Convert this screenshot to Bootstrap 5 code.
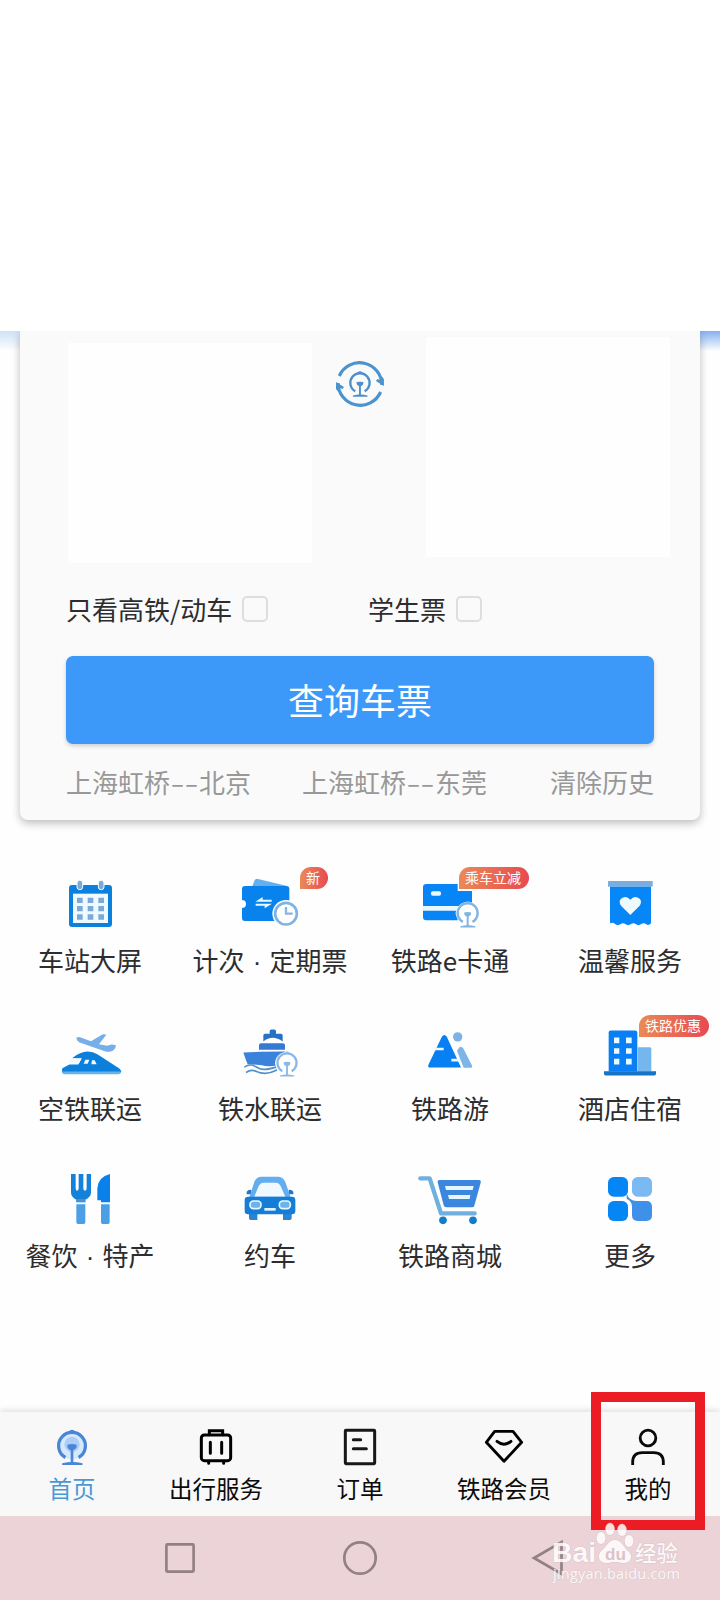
<!DOCTYPE html>
<html lang="zh-CN">
<head>
<meta charset="utf-8">
<meta name="viewport" content="width=device-width, initial-scale=1">
<title>铁路出行</title>
<link href="https://cdn.jsdelivr.net/npm/bootstrap@5.3.0/dist/css/bootstrap.min.css" rel="stylesheet">
<style>
  body { font-family: "Noto Sans CJK SC", sans-serif; background: #fefefe; color: #2d2d2f; }
  .screen { width: 720px; height: 1600px; overflow: hidden; }
  .top-blank { height: 331px; background: #fff; }
  .hero { height: 506px; padding: 0 20px 17px; overflow: hidden;
    background: linear-gradient(rgba(254,254,254,0), #fefefe) 0 0/100% 20px no-repeat, linear-gradient(90deg, #cfe2f6 20px, #85b0f2 690px) 0 0/100% 20px no-repeat; }
  .ticket { height: 489px; background: #fafafa; border-radius: 0 0 8px 8px; box-shadow: 0 3px 9px rgba(0,0,0,.27); }
  .stations { height: 232px; padding: 6px 30px 0 48px; }
  .station { width: 244px; height: 220px; background: #fefefe; }
  .station-from { margin-top: 6px; }
  .swap-icon { width: 50px; height: 50px; margin: 22px 42px 0 23px; }
  .options { font-size: 26px; line-height: 34px; margin: 29px 46px 0; height: 34px; }
  .first-option { width: 302px; }
  .tick { width: 26px; height: 26px; border: 2px solid #dedede; border-radius: 5px; margin-left: 10px; background: #fafafa; margin-top: -1px; }
  .search { height: 88px; margin: 30px 46px 0; background: #3c98f9; color: #fff; font-size: 36px; line-height: 86px; border-radius: 7px; box-shadow: 0 2px 4px rgba(0,0,0,.18); }
  .history { margin: 20px 46px 0; font-size: 26px; line-height: 36px; color: #989898; }
  .first-trip { margin-right: 51px; }
  .dash { display: inline-block; width: 29px; text-align: center; transform: scaleX(1.55); }
  .services { height: 575px; padding-top: 33px; }
  .service { height: 147.5px; }
  .service svg, .tab-item svg { display: block; overflow: visible; }
  .service-icon { width: 80px; height: 60px; }
  .service-label { font-size: 26px; line-height: 34px; margin-top: 13px; white-space: nowrap; }
  .dot { display: inline-block; width: 25px; text-align: center; font-family: "Liberation Sans", sans-serif; }
  .promo { position: absolute; left: 49px; top: -3px; width: 70px; height: 22px; border-radius: 11px 11px 11px 0; background: linear-gradient(90deg, #ea8a58, #e84a50); color: #fff; font-size: 14px; line-height: 21px; padding-right: 2px; text-align: center; white-space: nowrap; }
  .promo-new { left: 70px; width: 28px; }
  .tabs { height: 104px; background: #f8f8f8; box-shadow: 0 -2px 6px rgba(0,0,0,.12); padding-top: 15px; }
  .tab-item { width: 144px; color: #0b0b0b; font-size: 23.5px; line-height: 32px; position: relative; }
  .tab-item svg { width: 44px; height: 40px; margin-bottom: 5px; }
  .tab-item.active { color: #4b98d6; }
  .marker { position: absolute; left: 15px; top: -35px; width: 114px; height: 138px; border: 10px solid #eb1c24; z-index: 3; }
  .system { height: 84px; background: #ecd3d8; position: relative; }
  .system svg.keys { display: block; width: 720px; height: 84px; }
  .brand { position: absolute; left: 552px; top: 4px; z-index: 4; width: 132px; height: 68px; overflow: visible; opacity: .85; }
</style>
</head>
<body>
<svg width="0" height="0" class="position-absolute">
  <defs>
    <symbol id="rail" viewBox="0 0 90 110" overflow="visible">
      <path d="M25 86A41 41 0 1 1 65 86" fill="none" stroke="currentColor" stroke-width="10"/>
      <path d="M34 7q11-12 22 0z" fill="currentColor"/>
      <path d="M31 47q14-4 28 0v8q-4 8-10 9v36q10 0 28 4v5H15v-5q18-4 26-4V64q-7-2-10-9z" fill="currentColor"/>
    </symbol>
  </defs>
</svg>
<main class="screen d-flex flex-column">
  <div class="top-blank flex-shrink-0"></div>
  <section class="hero flex-shrink-0">
    <div class="ticket">
      <div class="stations d-flex justify-content-between align-items-start">
        <div class="station station-from"></div>
        <svg class="swap-icon" viewBox="-25 -25 50 50">
          <g fill="none" stroke="#4b93cf" stroke-width="3.200">
            <path d="M-20.700 -8A22.300 22.300 0 0 1 22 1"/>
            <path d="M20.700 8A22.300 22.300 0 0 1-22 -1"/>
          </g>
          <path d="M24 2l-8-5 1.500-2 3 1 1-4 2.500 3zM-24 -2l8 5-1.500 2-3-1-1 4-2.500-3z" fill="#4b93cf"/>
          <use href="#rail" x="-11.500" y="-13" width="23" height="26" color="#4b8fcb"/>
        </svg>
        <div class="station"></div>
      </div>
      <div class="options d-flex">
        <div class="first-option d-flex align-items-center"><span>只看高铁/动车</span><span class="tick"></span></div>
        <div class="d-flex align-items-center"><span>学生票</span><span class="tick"></span></div>
      </div>
      <div class="search text-center">查询车票</div>
      <div class="history d-flex">
        <span class="first-trip">上海虹桥<span class="dash">--</span>北京</span><span>上海虹桥<span class="dash">--</span>东莞</span><span class="ms-auto">清除历史</span>
      </div>
    </div>
  </section>

  <section class="services flex-shrink-0">
    <div class="row row-cols-4 g-0">
      <div class="col service d-flex flex-column align-items-center">
        <div class="service-icon position-relative">
          <svg viewBox="150 60 240 180" width="80" height="60">
            <rect x="207" y="105" width="129" height="126" rx="9" fill="#0b80dc"/><rect x="219" y="131" width="105" height="88" fill="#effaff"/>
            <g fill="#7da9d8"><path d="M231 143h17v16h-17zM263 143h17v16h-17zM295 143h17v16h-17zM231 168h17v16h-17zM263 168h17v16h-17zM295 168h17v16h-17zM231 193h17v16h-17zM263 193h17v16h-17zM295 193h17v16h-17z"/>
            <rect x="231" y="91" width="17" height="28" rx="8" stroke="#f4fcff" stroke-width="3"/><rect x="295" y="91" width="17" height="28" rx="8" stroke="#f4fcff" stroke-width="3"/></g>
          </svg>
        </div>
        <div class="service-label">车站大屏</div>
      </div>
      <div class="col service d-flex flex-column align-items-center">
        <div class="service-icon position-relative">
          <svg viewBox="690 60 240 180" width="80" height="60">
            <path d="M757 108l7-17q3-6 10-4l88 21z" fill="#64b0ee"/>
            <path d="M735 108h124q9 0 9 9v87q0 9-9 9H735q-9 0-9-9v-30a12 12 0 0 0 0-24v-33q0-9 9-9z" fill="#0882ec"/>
            <path d="M766 155h49v-6h-27v-8zM816 161h-49v6h27v8z" fill="#eaf8ff"/>
            <circle cx="858" cy="191" r="41" fill="#fff"/><circle cx="858" cy="191" r="32.500" fill="#fff" stroke="#7fb3e4" stroke-width="8"/>
            <path d="M858 171v20h20" fill="none" stroke="#8ab5df" stroke-width="7"/>
          </svg>
          <span class="promo promo-new">新</span>
        </div>
        <div class="service-label">计次<span class="dot">·</span>定期票</div>
      </div>
      <div class="col service d-flex flex-column align-items-center">
        <div class="service-icon position-relative">
          <svg viewBox="150 60 240 180" width="80" height="60">
            <rect x="189" y="102" width="147" height="109" rx="10" fill="#0785f7"/>
            <path d="M189 168h147v14H189z" fill="#e8f8ff"/><rect x="213" y="124" width="30" height="13" rx="5" fill="#e9f8ff"/>
            <path d="M293 96h48v27h-48z" fill="#fff"/><path d="M293 123h43v15h-43z" fill="#0785f7"/>
            <path d="M287 192a36 36 0 0 1 73 0v44h-58z" fill="#fff"/>
            <use href="#rail" x="288" y="153" width="70" height="80" color="#7fb4e3"/>
          </svg>
          <span class="promo">乘车立减</span>
        </div>
        <div class="service-label">铁路e卡通</div>
      </div>
      <div class="col service d-flex flex-column align-items-center">
        <div class="service-icon position-relative">
          <svg viewBox="690 60 240 180" width="80" height="60">
            <path d="M744 93h134v17H744z" fill="#7badde"/>
            <path d="M750 110h123v110q-7 8-14 3-8-7-16 0-8 5-15 0-8-7-16 0-8 5-15 0-8-7-16 0-8 5-15 0-8-7-16-3z" fill="#0786f8"/>
            <path d="M811 195l-28-28q-8-13 0-21 15-12 28 3 13-15 28-3 8 8 0 21z" fill="#effaff"/>
          </svg>
        </div>
        <div class="service-label">温馨服务</div>
      </div>

      <div class="col service d-flex flex-column align-items-center">
        <div class="service-icon position-relative">
          <svg viewBox="150 52.500 240 180" width="80" height="60">
            <path d="M229 112q4-4 11-2l33 12 34-20q6-2 12 1l-22 28 25 5 12-4q7 0 14 2-2 15-16 19-11 3-24-3l-71-25q-8-5-8-13z" fill="#75aee9"/>
            <path d="M187 203l21-11h27l10-18-29-1q25-20 47-20 16 0 29 8l66 43q7 6 5 12H187q-2-6 0-13z" fill="#0b7fdc"/>
            <path d="M200 187h38l7-14h-29zM251 190h12l5-12h-12zM274 191h16l-6-12h-8z" fill="#edf9ff"/>
            <path d="M186 213h177q0 8-8 8H194q-8 0-8-8z" fill="#66b3ec"/>
          </svg>
        </div>
        <div class="service-label">空铁联运</div>
      </div>
      <div class="col service d-flex flex-column align-items-center">
        <div class="service-icon position-relative">
          <svg viewBox="690 52.500 240 180" width="80" height="60">
            <path d="M809 92q0-5 5-5h9q5 0 5 5v8h15q5 0 5 5v18q-31-22-58 0v-18q0-5 5-5h14z" fill="#2672c6"/>
            <path d="M783 128h66q6 0 6 6v14h-78v-14q0-6 6-6z" fill="#3579d2"/>
            <path d="M730 156q48-3 125-3l-18 25-6 17q-29 5-45-1l-43-3-6-15z" fill="#3b82db"/>
            <path d="M733 200c19-13 29-4 43 3s29 4 55-4M738 216c20-13 30-2 44 1s30 2 50-9" fill="none" stroke="#568fc9" stroke-width="5"/>
            <path d="M825 190a36 36 0 0 1 72 0v44h-57z" fill="#fff"/>
            <use href="#rail" x="827" y="152" width="68" height="77" color="#8bb9e7"/>
          </svg>
        </div>
        <div class="service-label">铁水联运</div>
      </div>
      <div class="col service d-flex flex-column align-items-center">
        <div class="service-icon position-relative">
          <svg viewBox="150 52.500 240 180" width="80" height="60">
            <path d="M246 108q7-9 14 0l43 93h-92q-10 0-5-10z" fill="#087ff2"/>
            <path d="M225 142h26v7h-26zM274 175h29v8h-29z" fill="#e7f8ff"/>
            <circle cx="293" cy="109" r="14" fill="#7db2e7"/><path d="M291 151l7-10q6-6 12 3l26 51q2 7-5 7h-20z" fill="#7db5e9"/>
          </svg>
        </div>
        <div class="service-label">铁路游</div>
      </div>
      <div class="col service d-flex flex-column align-items-center">
        <div class="service-icon position-relative">
          <svg viewBox="690 52.500 240 180" width="80" height="60">
            <path d="M746 213V96q0-6 6-6h73q7 0 7 6v117z" fill="#087ff4"/><path d="M833 140h37q4 0 4 5v68h-41z" fill="#75b6ee"/>
            <path d="M732 212h156v8q0 5-5 5H737q-5 0-5-5z" fill="#1773c4"/>
            <path d="M762 111h16v17h-16zM798 111h17v17h-17zM762 143h16v17h-16zM798 143h17v17h-17zM762 175h16v17h-16zM798 175h17v17h-17z" fill="#ebfaff"/>
          </svg>
          <span class="promo">铁路优惠</span>
        </div>
        <div class="service-label">酒店住宿</div>
      </div>

      <div class="col service d-flex flex-column align-items-center">
        <div class="service-icon position-relative">
          <svg viewBox="150 45 240 180" width="80" height="60">
            <path d="M213 72h14v43q0 7 4 7 5 0 5-7V72h14v43q0 7 5 7t5-7V72h13v55q0 15-17 22v7h-27v-7q-16-7-16-22z" fill="#1481db"/>
            <path d="M330 72v85h-27v-6h-11v-36q2-34 38-43z" fill="#0980ea"/>
            <path d="M229 163h27v54q0 5-5 5h-17q-5 0-5-5zM303 163h26v54q0 5-5 5h-16q-5 0-5-5z" fill="#4b9fe6"/><path d="M229 147h27v10h-27z" fill="#4493dc"/>
          </svg>
        </div>
        <div class="service-label">餐饮<span class="dot">·</span>特产</div>
      </div>
      <div class="col service d-flex flex-column align-items-center">
        <div class="service-icon position-relative">
          <svg viewBox="690 45 240 180" width="80" height="60">
            <path d="M740 125q6-8 14-5v13h-14zM866 120q8-3 14 5v8h-14z" fill="#2575ca"/>
            <path d="M748 142l15-46q6-16 22-16h48q16 0 23 16l16 46z" fill="#63aeee"/><path d="M763 140l13-32q5-10 16-10h35q10 0 15 10l14 32z" fill="#eff9ff"/>
            <path d="M747 190h25v20h-20q-5 0-5-5zM849 190h26v15q0 5-5 5h-21z" fill="#2b84d1"/>
            <rect x="734" y="140" width="152" height="53" rx="10" fill="#157dd5"/>
            <g fill="#6ab3ec" stroke="#e7f8ff" stroke-width="5"><rect x="750" y="153" width="33" height="23" rx="10"/><rect x="838" y="153" width="33" height="23" rx="10"/></g>
            <path d="M793 174h34v8h-34z" fill="#dff5ff"/>
          </svg>
        </div>
        <div class="service-label">约车</div>
      </div>
      <div class="col service d-flex flex-column align-items-center">
        <div class="service-icon position-relative">
          <svg viewBox="150 45 240 180" width="80" height="60">
            <path d="M181 85h28l34 105h101" fill="none" stroke="#70b0df" stroke-width="13" stroke-linecap="round" stroke-linejoin="round"/>
            <path d="M239 90h118q7 0 5 8l-19 69q-1 5-7 5h-77q-6 0-8-6l-18-69q-1-7 6-7z" fill="#3b87df"/>
            <path d="M255 108h86l-3 12h-80zM264 135h67l-2 12h-62z" fill="#e4f6ff"/>
            <circle cx="249" cy="211" r="11.500" fill="#147dc8"/><circle cx="339" cy="211" r="11.500" fill="#147dc8"/>
          </svg>
        </div>
        <div class="service-label">铁路商城</div>
      </div>
      <div class="col service d-flex flex-column align-items-center">
        <div class="service-icon position-relative">
          <svg viewBox="690 45 240 180" width="80" height="60">
            <rect x="744" y="81" width="60" height="59" rx="17" fill="#0586f4"/><rect x="744" y="153" width="60" height="60" rx="17" fill="#0586f4"/>
            <rect x="816" y="81" width="60" height="59" rx="17" fill="#7bb9f3"/><path d="M800 130q7 23 30 23h29q17 0 17 17v26q0 17-17 17h-26q-17 0-17-17v-26q0-17-16-24z" fill="#3e90e8"/>
          </svg>
        </div>
        <div class="service-label">更多</div>
      </div>
    </div>
  </section>

  <nav class="tabs d-flex flex-shrink-0">
    <div class="tab-item active d-flex flex-column align-items-center">
      <svg viewBox="150 141 132 120"><circle cx="216" cy="198" r="40" fill="#d5e8fc"/><circle cx="216" cy="193" r="23" fill="#abcef8"/><use href="#rail" x="171" y="148" width="90" height="108" color="#4a86d5"/></svg>
      <span>首页</span>
    </div>
    <div class="tab-item d-flex flex-column align-items-center">
      <svg viewBox="582 141 132 120" fill="none" stroke="#000" stroke-width="9" stroke-linecap="round"><rect x="604" y="165" width="88" height="77" rx="9"/><path d="M628 164v-12h40v12M631 187v33M665 187v33M626 246v4M671 246v4"/></svg>
      <span>出行服务</span>
    </div>
    <div class="tab-item d-flex flex-column align-items-center">
      <svg viewBox="1014 141 132 120" fill="none" stroke="#171719" stroke-width="9"><rect x="1036" y="151" width="88" height="100" rx="2"/><path d="M1060 179h22M1060 206h39" stroke-linecap="round"/></svg>
      <span>订单</span>
    </div>
    <div class="tab-item d-flex flex-column align-items-center">
      <svg viewBox="366 141 132 120" fill="none" stroke="#000" stroke-width="8.500" stroke-linejoin="round" stroke-linecap="round"><path d="M404 154h55l26 33-53 57-53-57zM411 184q21 17 42 0"/></svg>
      <span>铁路会员</span>
    </div>
    <div class="tab-item d-flex flex-column align-items-center">
      <svg viewBox="798 141 132 120" fill="none" stroke="#0a0a0a" stroke-width="8.500"><circle cx="864" cy="174" r="23.500"/><path d="M818 255v-8q0-29 29-29h34q29 0 29 29v8"/></svg>
      <span>我的</span>
      <div class="marker"></div>
    </div>
  </nav>
  <footer class="system flex-shrink-0">
    <svg class="keys" viewBox="0 0 720 84" fill="none" stroke="#938084" stroke-width="2.700"><rect x="166.400" y="28.400" width="27.200" height="27.200" rx="1"/><circle cx="360" cy="42" r="15.700"/><path d="M561.500 26v32L534 42z"/></svg>
    <svg class="brand" viewBox="0 0 132 68">
      <g fill="#fff" stroke="#c9b5ba" stroke-width=".7" paint-order="stroke">
        <text x="0" y="42" font-family="Liberation Sans, sans-serif" font-weight="700" font-size="27" textLength="44" lengthAdjust="spacingAndGlyphs">Bai</text>
        <ellipse cx="49" cy="18" rx="4.500" ry="6"/><ellipse cx="58" cy="9" rx="4.500" ry="6"/><ellipse cx="70" cy="10" rx="4.500" ry="6"/><ellipse cx="77" cy="21" rx="4.500" ry="6"/>
        <path d="M63 20c7 0 8 7 13 11 7 6 1 13-6 12q-7-2-14 0c-8 1-12-6-7-12 6-4 7-11 14-11z"/>
        <text x="83" y="41" font-family="Noto Sans CJK SC, sans-serif" font-weight="500" font-size="22" textLength="43" lengthAdjust="spacingAndGlyphs">经验</text>
        <text x="1" y="59" font-family="Open Sans, sans-serif" font-size="14.500" textLength="127" stroke-width=".4">jingyan.baidu.com</text>
      </g>
      <text x="53" y="40" font-family="Liberation Sans, sans-serif" font-weight="700" font-size="17" fill="#dcbfc6" textLength="21" lengthAdjust="spacingAndGlyphs">du</text>
    </svg>
  </footer>
</main>
<script src="https://cdn.jsdelivr.net/npm/bootstrap@5.3.0/dist/js/bootstrap.bundle.min.js"></script>
</body>
</html>
